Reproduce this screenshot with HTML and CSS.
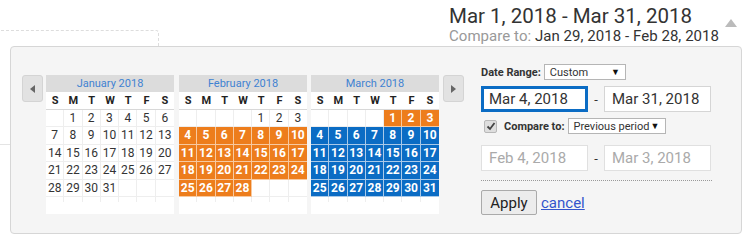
FILE: index.html
```html
<!DOCTYPE html>
<html>
  <head>
    <meta charset="UTF-8" />
    <meta name="viewport" content="width=device-width, initial-scale=1.0" />
    <link rel="stylesheet" href="styles.css">
  </head>
  <body>
    <div class="backdrop-box"></div>
    <div class="backdrop-line"></div>
    <header class="top">
      <div class="summary">
        <div class="summary-main">Mar 1, 2018 - Mar 31, 2018</div>
        <div class="summary-compare"><span class="muted">Compare to:</span> Jan 29, 2018 - Feb 28, 2018</div>
      </div>
      <span class="toggle"></span>
    </header>
    <div class="panel">
      <div class="calendars">
        <button class="nav prev"><span></span></button>
        <div class="month">
          <div class="month-title">January 2018</div>
          <div class="dow"><span>S</span><span>M</span><span>T</span><span>W</span><span>T</span><span>F</span><span>S</span></div>
          <div class="days">
            <span></span><span>1</span><span>2</span><span>3</span><span>4</span><span>5</span><span>6</span>
            <span>7</span><span>8</span><span>9</span><span>10</span><span>11</span><span>12</span><span>13</span>
            <span>14</span><span>15</span><span>16</span><span>17</span><span>18</span><span>19</span><span>20</span>
            <span>21</span><span>22</span><span>23</span><span>24</span><span>25</span><span>26</span><span>27</span>
            <span>28</span><span>29</span><span>30</span><span>31</span><span></span><span></span><span></span>
            <span class="pad"></span><span class="pad"></span><span class="pad"></span><span class="pad"></span><span class="pad"></span><span class="pad"></span><span class="pad"></span>
          </div>
        </div>
        <div class="month">
          <div class="month-title">February 2018</div>
          <div class="dow"><span>S</span><span>M</span><span>T</span><span>W</span><span>T</span><span>F</span><span>S</span></div>
          <div class="days">
            <span></span><span></span><span></span><span></span><span>1</span><span>2</span><span>3</span>
            <span class="cmp">4</span><span class="cmp">5</span><span class="cmp">6</span><span class="cmp">7</span><span class="cmp">8</span><span class="cmp">9</span><span class="cmp">10</span>
            <span class="cmp">11</span><span class="cmp">12</span><span class="cmp">13</span><span class="cmp">14</span><span class="cmp">15</span><span class="cmp">16</span><span class="cmp">17</span>
            <span class="cmp">18</span><span class="cmp">19</span><span class="cmp">20</span><span class="cmp">21</span><span class="cmp">22</span><span class="cmp">23</span><span class="cmp">24</span>
            <span class="cmp">25</span><span class="cmp">26</span><span class="cmp">27</span><span class="cmp">28</span><span></span><span></span><span></span>
            <span class="pad"></span><span class="pad"></span><span class="pad"></span><span class="pad"></span><span class="pad"></span><span class="pad"></span><span class="pad"></span>
          </div>
        </div>
        <div class="month">
          <div class="month-title">March 2018</div>
          <div class="dow"><span>S</span><span>M</span><span>T</span><span>W</span><span>T</span><span>F</span><span>S</span></div>
          <div class="days">
            <span></span><span></span><span></span><span></span><span class="cmp">1</span><span class="cmp">2</span><span class="cmp">3</span>
            <span class="sel">4</span><span class="sel">5</span><span class="sel">6</span><span class="sel">7</span><span class="sel">8</span><span class="sel">9</span><span class="sel">10</span>
            <span class="sel">11</span><span class="sel">12</span><span class="sel">13</span><span class="sel">14</span><span class="sel">15</span><span class="sel">16</span><span class="sel">17</span>
            <span class="sel">18</span><span class="sel">19</span><span class="sel">20</span><span class="sel">21</span><span class="sel">22</span><span class="sel">23</span><span class="sel">24</span>
            <span class="sel">25</span><span class="sel">26</span><span class="sel">27</span><span class="sel">28</span><span class="sel">29</span><span class="sel">30</span><span class="sel">31</span>
            <span class="pad"></span><span class="pad"></span><span class="pad"></span><span class="pad"></span><span class="pad"></span><span class="pad"></span><span class="pad"></span>
          </div>
        </div>
        <button class="nav next"><span></span></button>
      </div>
      <div class="controls">
        <div class="line">
          <label class="label">Date Range:</label>
          <div class="select range-select"><span>Custom</span><span class="caret">&#9660;</span></div>
        </div>
        <div class="line dates">
          <div class="field active">Mar 4, 2018</div>
          <span class="dash">-</span>
          <div class="field">Mar 31, 2018</div>
        </div>
        <div class="line compare-line">
          <span class="checkbox"><svg width="10" height="10" viewBox="0 0 10 10"><path d="M1.5 5.5 L4 8 L8.5 2" fill="none" stroke="#444" stroke-width="1.8"/></svg></span>
          <label class="label">Compare to:</label>
          <div class="select period-select"><span>Previous period</span><span class="caret">&#9660;</span></div>
        </div>
        <div class="line dates compare-dates">
          <div class="field faded">Feb 4, 2018</div>
          <span class="dash">-</span>
          <div class="field faded">Mar 3, 2018</div>
        </div>
        <div class="divider"></div>
        <div class="line actions">
          <button class="apply">Apply</button>
          <a href="#" class="cancel">cancel</a>
        </div>
      </div>
    </div>
  </body>
</html>
```

FILE: styles.css
```css
* {
  box-sizing: border-box;
}
body {
  margin: 0;
  background: white;
  font-family: Roboto, "Liberation Sans", sans-serif;
  color: #333;
  position: relative;
  width: 750px;
  height: 241px;
  overflow: hidden;
}
.backdrop-box {
  position: absolute;
  left: -4px;
  top: 30px;
  width: 163px;
  height: 30px;
  border-top: 1px dashed #ddd;
  border-right: 1px dashed #ddd;
  border-radius: 0 3px 0 0;
}
.backdrop-line {
  position: absolute;
  left: 0;
  top: 144px;
  width: 12px;
  border-top: 1px solid #e4e4e4;
}
.top {
  height: 46px;
  display: flex;
  padding-left: 449px;
}
.summary {
  padding-top: 4px;
}
.summary-main {
  font-size: 20.5px;
  line-height: 24px;
  color: #333;
}
.summary-compare {
  font-size: 15px;
  line-height: 16px;
  letter-spacing: 0.05px;
}
.muted {
  color: #999;
}
.toggle {
  margin-left: 6px;
  margin-top: 19px;
  width: 0;
  height: 0;
  border-left: 6px solid transparent;
  border-right: 6px solid transparent;
  border-bottom: 8px solid #bbb;
}
.panel {
  position: relative;
  margin-left: 10px;
  width: 732px;
  height: 188px;
  background: #f5f5f5;
  border: 1px solid #d6d6d6;
  border-radius: 4px;
  display: flex;
  padding: 17px 0 0 11px;
}
.calendars {
  display: flex;
  align-items: flex-start;
  margin-top: 11px;
}
.nav {
  width: 21px;
  height: 27px;
  padding: 0;
  border: 1px solid #d4d4d4;
  border-radius: 3px;
  background: #e2e2e2;
  display: flex;
  align-items: center;
  justify-content: center;
}
.nav span {
  width: 0;
  height: 0;
  border-top: 4px solid transparent;
  border-bottom: 4px solid transparent;
}
.prev {
  margin-right: 3px;
}
.prev span {
  border-right: 5px solid #666;
}
.next {
  margin-left: 4px;
}
.next span {
  border-left: 5px solid #666;
}
.month {
  width: 128px;
  background: white;
}
.month + .month {
  margin-left: 5px;
}
.month + .month + .month {
  margin-left: 4px;
}
.month-title {
  height: 17px;
  line-height: 17px;
  background: #dcdcdc;
  color: #3f82d2;
  font-size: 11px;
  text-align: center;
}
.dow {
  display: grid;
  grid-template-columns: repeat(7, 1fr);
  height: 18px;
  border-bottom: 1px solid #d8d8d8;
}
.dow span {
  font-size: 11px;
  font-weight: bold;
  line-height: 17px;
  text-align: center;
  color: #222;
}
.days {
  display: grid;
  grid-template-columns: repeat(7, 1fr);
  grid-auto-rows: 17.4px;
}
.days span {
  font-size: 12px;
  line-height: 16px;
  text-align: center;
  color: #333;
  border-right: 1px solid #eee;
  border-bottom: 1px solid #eee;
}
.days span:nth-child(7n) {
  border-right: none;
}
.days .pad {
  height: 5px;
  border-bottom: none;
}
.days .cmp {
  background: #ed7d1c;
  color: white;
  font-weight: bold;
  border-color: #f7c9a0;
}
.days .sel {
  background: #0b6cc4;
  color: white;
  font-weight: bold;
  border-color: #a9c9e8;
}
.controls {
  margin-left: 17px;
  width: 240px;
}
.line {
  display: flex;
  align-items: center;
}
.label {
  font-size: 11px;
  font-weight: bold;
  color: #333;
  margin-right: 3px;
}
.select {
  height: 16px;
  background: white;
  border: 1px solid #b5b5b5;
  font-size: 11px;
  display: flex;
  justify-content: space-between;
  align-items: center;
  padding: 0 5px;
}
.caret {
  font-size: 9px;
  color: #111;
}
.range-select {
  width: 82px;
}
.period-select {
  width: 98px;
}
.dates {
  margin-top: 6px;
}
.field {
  width: 107px;
  height: 26px;
  background: white;
  border: 1px solid #d5d5d5;
  font-size: 15px;
  line-height: 24px;
  padding-left: 7px;
  color: #333;
}
.field.active {
  border: 3px solid #0b6cc4;
  padding-left: 5px;
  line-height: 20px;
}
.field.faded {
  color: #aaa;
  border-color: #e0e0e0;
}
.dash {
  width: 16px;
  text-align: center;
  font-size: 13px;
}
.compare-line {
  margin-top: 6px;
}
.checkbox {
  width: 13px;
  height: 13px;
  margin: 0 7px 0 3px;
  border: 1px solid #b8b8b8;
  border-radius: 2px;
  background: #dedede;
  display: flex;
  align-items: center;
  justify-content: center;
}
.compare-dates {
  margin-top: 11px;
}
.divider {
  margin-top: 9px;
  width: 231px;
  border-top: 1px dotted #999;
}
.actions {
  margin-top: 9px;
}
.apply {
  width: 56px;
  height: 25px;
  font-family: Roboto, "Liberation Sans", sans-serif;
  font-size: 15px;
  color: #222;
  background: #ececec;
  border: 1px solid #aaa;
  border-radius: 2px;
  padding: 0;
  margin-right: 4px;
}
.cancel {
  font-size: 15px;
  color: #3355cc;
}
```
